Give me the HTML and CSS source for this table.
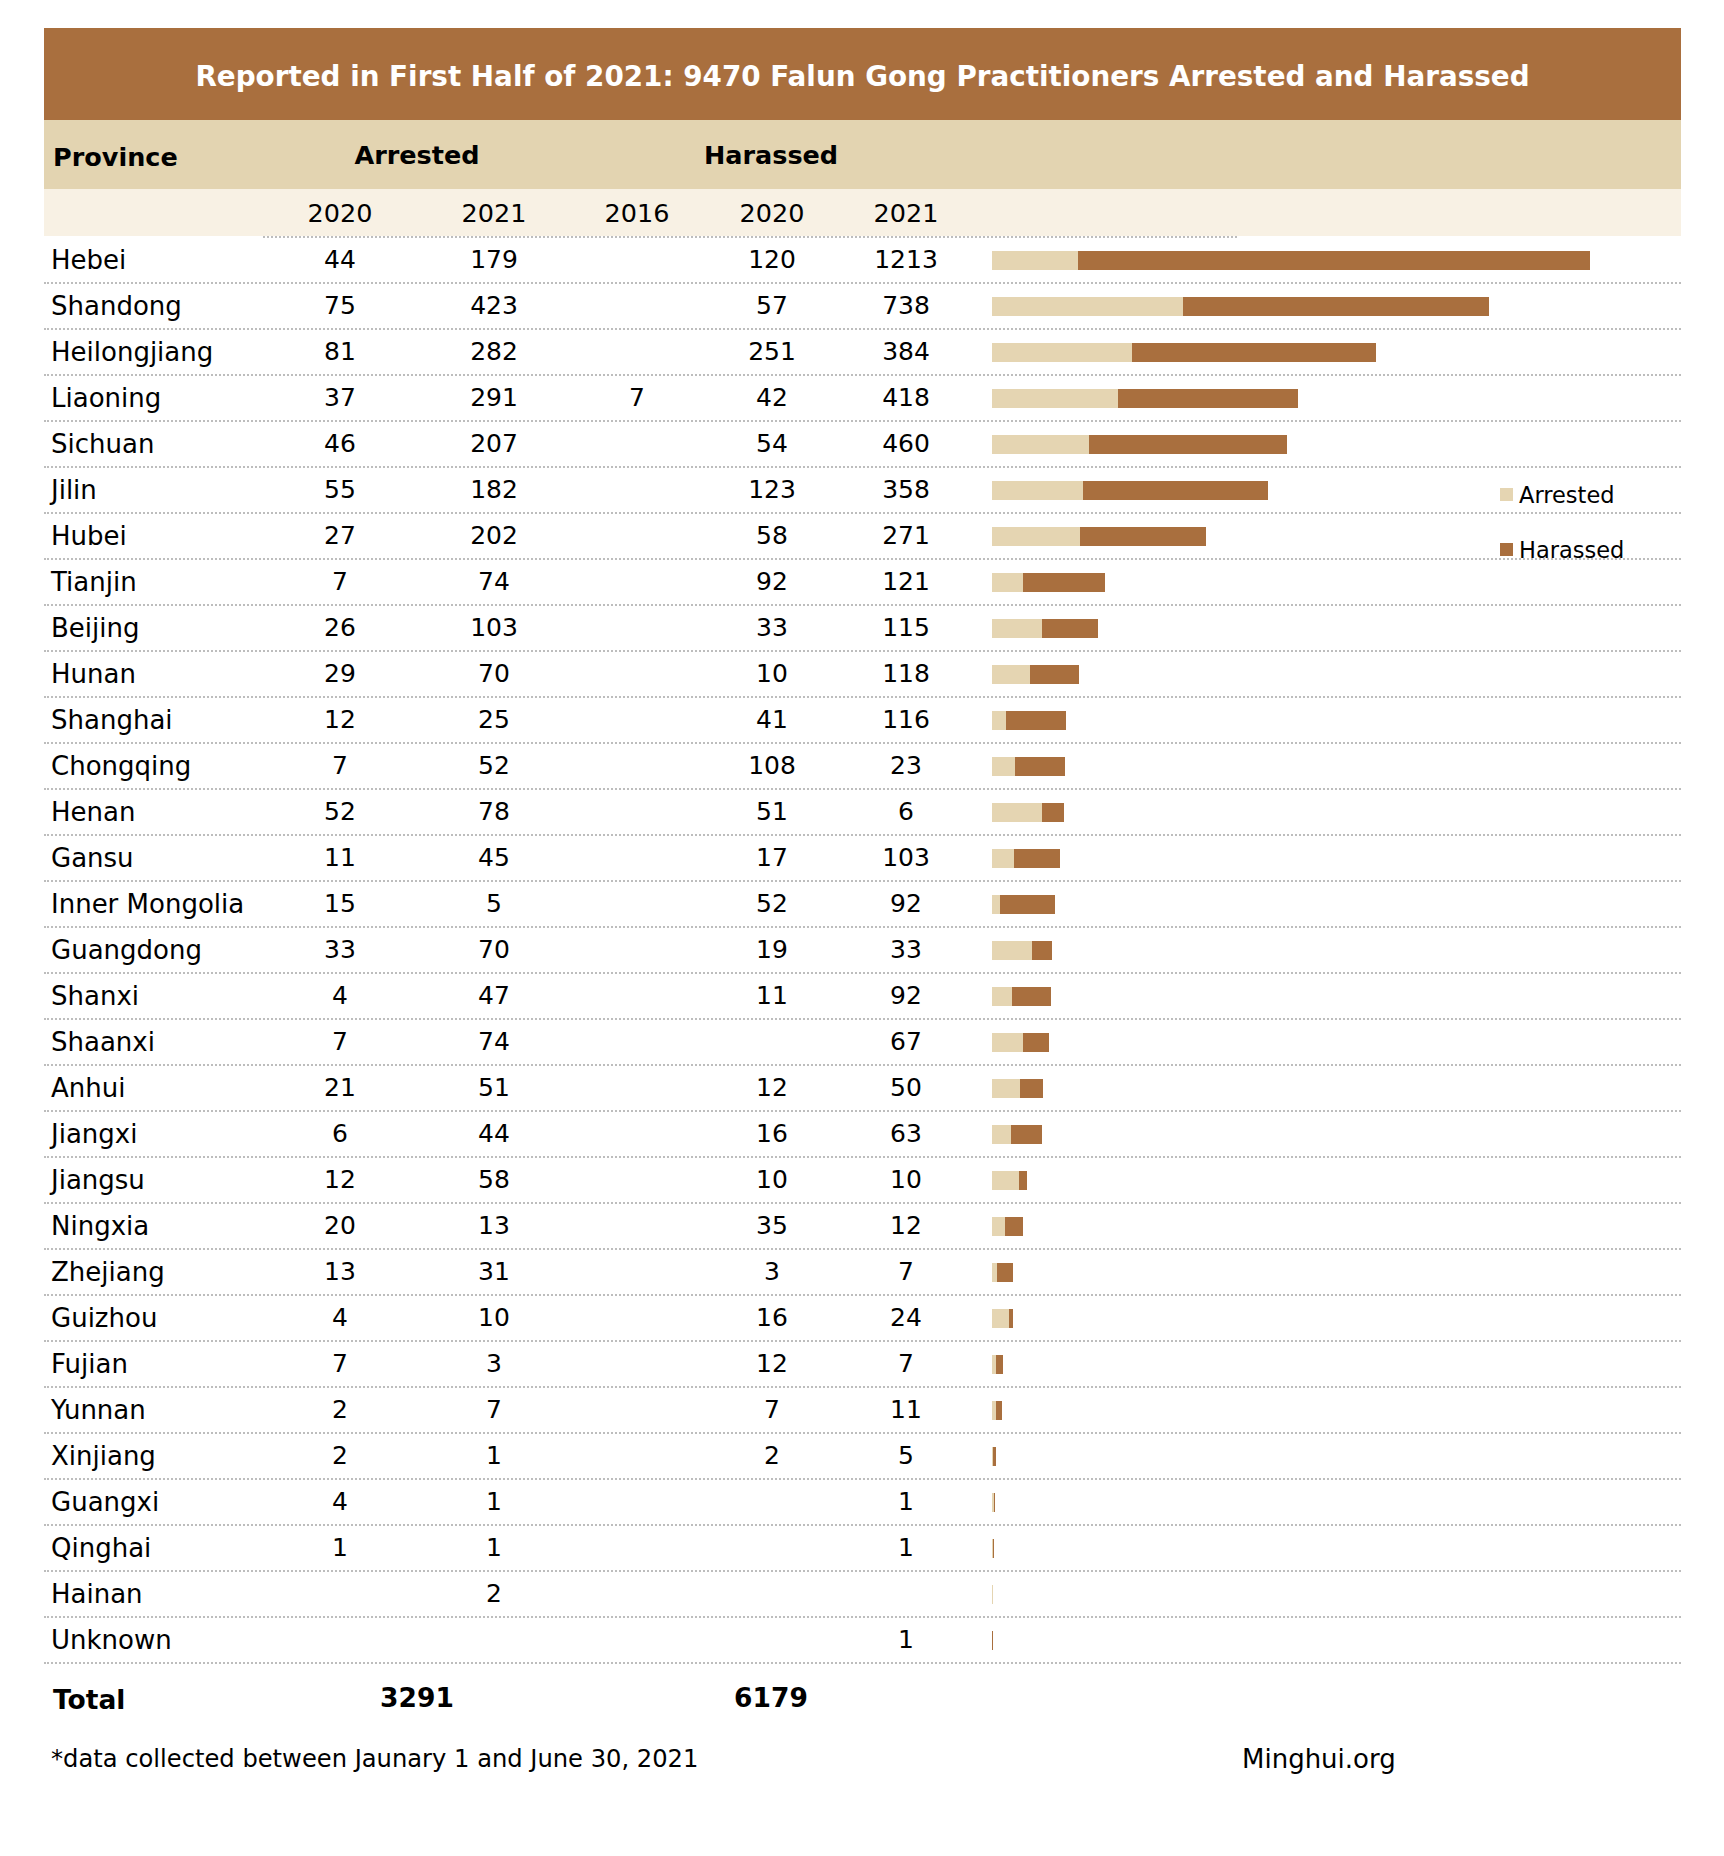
FILE: index.html
```html
<!DOCTYPE html>
<html lang="en">
<head>
<meta charset="utf-8">
<title>Reported in First Half of 2021</title>
<link rel="stylesheet" href="styles.css">
</head>
<body>
<div class="chart">
  <div class="title">Reported in First Half of 2021: 9470 Falun Gong Practitioners Arrested and Harassed</div>
  <div class="head grid">
    <div class="name">Province</div>
    <div class="span-a">Arrested</div>
    <div class="span-h">Harassed</div>
  </div>
  <div class="years grid">
    <div class="name"></div>
    <div class="num">2020</div>
    <div class="num">2021</div>
    <div class="num">2016</div>
    <div class="num">2020</div>
    <div class="num">2021</div>
  </div>
  <div class="rows">
    <div class="row grid"><div class="name">Hebei</div><div class="num">44</div><div class="num">179</div><div class="num"></div><div class="num">120</div><div class="num">1213</div><div class="bar"><span class="a" style="width:85.7px"></span><span class="h" style="width:512.3px"></span></div></div>
    <div class="row grid"><div class="name">Shandong</div><div class="num">75</div><div class="num">423</div><div class="num"></div><div class="num">57</div><div class="num">738</div><div class="bar"><span class="a" style="width:191.4px"></span><span class="h" style="width:305.5px"></span></div></div>
    <div class="row grid"><div class="name">Heilongjiang</div><div class="num">81</div><div class="num">282</div><div class="num"></div><div class="num">251</div><div class="num">384</div><div class="bar"><span class="a" style="width:139.5px"></span><span class="h" style="width:244px"></span></div></div>
    <div class="row grid"><div class="name">Liaoning</div><div class="num">37</div><div class="num">291</div><div class="num">7</div><div class="num">42</div><div class="num">418</div><div class="bar"><span class="a" style="width:126.1px"></span><span class="h" style="width:179.5px"></span></div></div>
    <div class="row grid"><div class="name">Sichuan</div><div class="num">46</div><div class="num">207</div><div class="num"></div><div class="num">54</div><div class="num">460</div><div class="bar"><span class="a" style="width:97.2px"></span><span class="h" style="width:197.5px"></span></div></div>
    <div class="row grid"><div class="name">Jilin</div><div class="num">55</div><div class="num">182</div><div class="num"></div><div class="num">123</div><div class="num">358</div><div class="bar"><span class="a" style="width:91.1px"></span><span class="h" style="width:184.8px"></span></div></div>
    <div class="row grid"><div class="name">Hubei</div><div class="num">27</div><div class="num">202</div><div class="num"></div><div class="num">58</div><div class="num">271</div><div class="bar"><span class="a" style="width:88px"></span><span class="h" style="width:126.4px"></span></div></div>
    <div class="row grid"><div class="name">Tianjin</div><div class="num">7</div><div class="num">74</div><div class="num"></div><div class="num">92</div><div class="num">121</div><div class="bar"><span class="a" style="width:31.1px"></span><span class="h" style="width:81.9px"></span></div></div>
    <div class="row grid"><div class="name">Beijing</div><div class="num">26</div><div class="num">103</div><div class="num"></div><div class="num">33</div><div class="num">115</div><div class="bar"><span class="a" style="width:49.6px"></span><span class="h" style="width:56.9px"></span></div></div>
    <div class="row grid"><div class="name">Hunan</div><div class="num">29</div><div class="num">70</div><div class="num"></div><div class="num">10</div><div class="num">118</div><div class="bar"><span class="a" style="width:38px"></span><span class="h" style="width:49.2px"></span></div></div>
    <div class="row grid"><div class="name">Shanghai</div><div class="num">12</div><div class="num">25</div><div class="num"></div><div class="num">41</div><div class="num">116</div><div class="bar"><span class="a" style="width:14.2px"></span><span class="h" style="width:60.3px"></span></div></div>
    <div class="row grid"><div class="name">Chongqing</div><div class="num">7</div><div class="num">52</div><div class="num"></div><div class="num">108</div><div class="num">23</div><div class="bar"><span class="a" style="width:22.7px"></span><span class="h" style="width:50.3px"></span></div></div>
    <div class="row grid"><div class="name">Henan</div><div class="num">52</div><div class="num">78</div><div class="num"></div><div class="num">51</div><div class="num">6</div><div class="bar"><span class="a" style="width:50px"></span><span class="h" style="width:21.9px"></span></div></div>
    <div class="row grid"><div class="name">Gansu</div><div class="num">11</div><div class="num">45</div><div class="num"></div><div class="num">17</div><div class="num">103</div><div class="bar"><span class="a" style="width:21.5px"></span><span class="h" style="width:46.1px"></span></div></div>
    <div class="row grid"><div class="name">Inner Mongolia</div><div class="num">15</div><div class="num">5</div><div class="num"></div><div class="num">52</div><div class="num">92</div><div class="bar"><span class="a" style="width:7.7px"></span><span class="h" style="width:55.3px"></span></div></div>
    <div class="row grid"><div class="name">Guangdong</div><div class="num">33</div><div class="num">70</div><div class="num"></div><div class="num">19</div><div class="num">33</div><div class="bar"><span class="a" style="width:39.6px"></span><span class="h" style="width:20px"></span></div></div>
    <div class="row grid"><div class="name">Shanxi</div><div class="num">4</div><div class="num">47</div><div class="num"></div><div class="num">11</div><div class="num">92</div><div class="bar"><span class="a" style="width:19.6px"></span><span class="h" style="width:39.6px"></span></div></div>
    <div class="row grid"><div class="name">Shaanxi</div><div class="num">7</div><div class="num">74</div><div class="num"></div><div class="num"></div><div class="num">67</div><div class="bar"><span class="a" style="width:31.1px"></span><span class="h" style="width:25.7px"></span></div></div>
    <div class="row grid"><div class="name">Anhui</div><div class="num">21</div><div class="num">51</div><div class="num"></div><div class="num">12</div><div class="num">50</div><div class="bar"><span class="a" style="width:27.7px"></span><span class="h" style="width:23.8px"></span></div></div>
    <div class="row grid"><div class="name">Jiangxi</div><div class="num">6</div><div class="num">44</div><div class="num"></div><div class="num">16</div><div class="num">63</div><div class="bar"><span class="a" style="width:19.2px"></span><span class="h" style="width:30.4px"></span></div></div>
    <div class="row grid"><div class="name">Jiangsu</div><div class="num">12</div><div class="num">58</div><div class="num"></div><div class="num">10</div><div class="num">10</div><div class="bar"><span class="a" style="width:26.9px"></span><span class="h" style="width:7.7px"></span></div></div>
    <div class="row grid"><div class="name">Ningxia</div><div class="num">20</div><div class="num">13</div><div class="num"></div><div class="num">35</div><div class="num">12</div><div class="bar"><span class="a" style="width:12.7px"></span><span class="h" style="width:18.1px"></span></div></div>
    <div class="row grid"><div class="name">Zhejiang</div><div class="num">13</div><div class="num">31</div><div class="num"></div><div class="num">3</div><div class="num">7</div><div class="bar"><span class="a" style="width:5.4px"></span><span class="h" style="width:15.4px"></span></div></div>
    <div class="row grid"><div class="name">Guizhou</div><div class="num">4</div><div class="num">10</div><div class="num"></div><div class="num">16</div><div class="num">24</div><div class="bar"><span class="a" style="width:16.9px"></span><span class="h" style="width:3.8px"></span></div></div>
    <div class="row grid"><div class="name">Fujian</div><div class="num">7</div><div class="num">3</div><div class="num"></div><div class="num">12</div><div class="num">7</div><div class="bar"><span class="a" style="width:3.8px"></span><span class="h" style="width:7.3px"></span></div></div>
    <div class="row grid"><div class="name">Yunnan</div><div class="num">2</div><div class="num">7</div><div class="num"></div><div class="num">7</div><div class="num">11</div><div class="bar"><span class="a" style="width:3.5px"></span><span class="h" style="width:6.9px"></span></div></div>
    <div class="row grid"><div class="name">Xinjiang</div><div class="num">2</div><div class="num">1</div><div class="num"></div><div class="num">2</div><div class="num">5</div><div class="bar"><span class="a" style="width:1.2px"></span><span class="h" style="width:2.7px"></span></div></div>
    <div class="row grid"><div class="name">Guangxi</div><div class="num">4</div><div class="num">1</div><div class="num"></div><div class="num"></div><div class="num">1</div><div class="bar"><span class="a" style="width:2px"></span><span class="h" style="width:1px"></span></div></div>
    <div class="row grid"><div class="name">Qinghai</div><div class="num">1</div><div class="num">1</div><div class="num"></div><div class="num"></div><div class="num">1</div><div class="bar"><span class="a" style="width:1px"></span><span class="h" style="width:1px"></span></div></div>
    <div class="row grid"><div class="name">Hainan</div><div class="num"></div><div class="num">2</div><div class="num"></div><div class="num"></div><div class="num"></div><div class="bar"><span class="a" style="width:1px"></span></div></div>
    <div class="row grid"><div class="name">Unknown</div><div class="num"></div><div class="num"></div><div class="num"></div><div class="num"></div><div class="num">1</div><div class="bar"><span class="h" style="width:1px"></span></div></div>
  </div>
  <div class="total grid">
    <div class="name">Total</div>
    <div class="span-a">3291</div>
    <div class="span-h">6179</div>
  </div>
  <div class="footer">
    <div class="note">*data collected between Jaunary 1 and June 30, 2021</div>
    <div class="site">Minghui.org</div>
  </div>
  <div class="legend">
    <div class="legend-item"><span class="swatch swatch-a"></span>Arrested</div>
    <div class="legend-item"><span class="swatch swatch-h"></span>Harassed</div>
  </div>
</div>
</body>
</html>
```

FILE: styles.css
```css
html, body {
  margin: 0;
  padding: 0;
  background: #ffffff;
}

body {
  font-family: "DejaVu Sans", Verdana, sans-serif;
  color: #000000;
}

.chart {
  position: relative;
  width: 1637px;
  margin: 28px 0 0 44px;
}

.title {
  height: 92px;
  box-sizing: border-box;
  padding-top: 4px;
  background: #a96f3e;
  color: #ffffff;
  font-weight: bold;
  font-size: 27.8px;
  display: flex;
  align-items: center;
  justify-content: center;
  white-space: nowrap;
}

.grid {
  display: grid;
  grid-template-columns: 219px 154px 154px 132px 138px 130px 1fr;
  align-items: center;
}

.name {
  padding-left: 7px;
  white-space: nowrap;
}

.num {
  text-align: center;
}

.head {
  height: 69px;
  background: #e3d4b1;
  font-weight: bold;
  font-size: 25.5px;
}

.head .name {
  padding-left: 9px;
  padding-top: 4px;
}

.span-a {
  grid-column: 2 / 4;
  text-align: center;
}

.span-h {
  grid-column: 4 / 7;
  text-align: center;
}

.years {
  height: 47px;
  background: #f8f1e4;
  font-size: 25.5px;
}

.rows {
  font-size: 25px;
}

.rows .name {
  font-size: 26px;
}

.rows::before {
  content: "";
  display: block;
  margin-left: 219px;
  width: 974px;
  border-top: 2px dotted #bdbdbd;
}

.row {
  height: 46px;
  box-sizing: border-box;
  padding-bottom: 1px;
  border-bottom: 2px dotted #bdbdbd;
}

.bar {
  display: flex;
  height: 19px;
  padding-left: 21px;
  margin-top: 2px;
}

.bar span {
  display: block;
  height: 19px;
}

.bar .a {
  background: #e5d5b2;
}

.bar .h {
  background: #a96f3e;
}

.total {
  height: 66px;
  font-weight: bold;
  font-size: 26.5px;
}

.total .name {
  padding-left: 9px;
  padding-top: 5px;
}

.footer {
  display: grid;
  grid-template-columns: 1198px auto;
  align-items: center;
  height: 58px;
}

.note {
  padding-left: 7px;
  font-size: 24.2px;
}

.site {
  font-size: 26px;
}

.legend {
  position: absolute;
  left: 1456px;
  top: 454px;
  display: flex;
  flex-direction: column;
  gap: 30px;
  font-size: 22.5px;
}

.legend-item {
  display: flex;
  align-items: center;
  height: 25px;
}

.swatch {
  display: inline-block;
  width: 13px;
  height: 13px;
  margin-right: 6px;
}

.swatch-a {
  background: #e5d5b2;
}

.swatch-h {
  background: #a96f3e;
}
```
